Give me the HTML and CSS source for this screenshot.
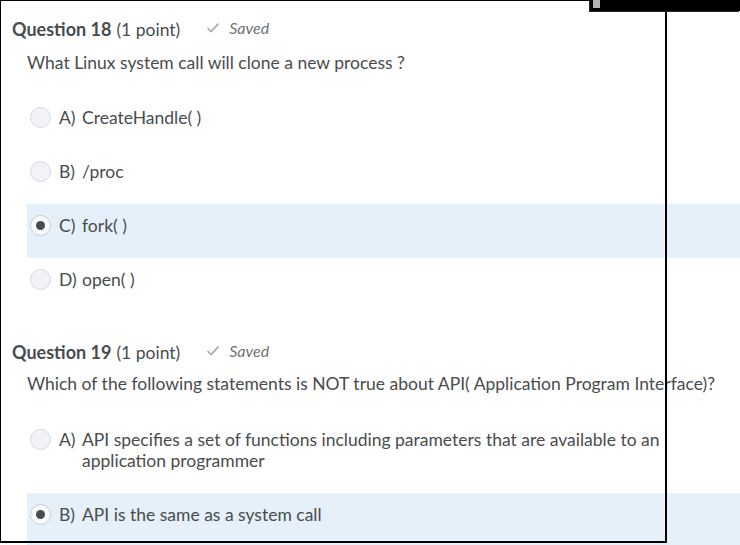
FILE: index.html
```html
<!DOCTYPE html>
<html>
<head>
<meta charset="utf-8">
<link rel="stylesheet" href="styles.css">
</head>
<body>
<div class="page">
  <section class="question q-first">
    <div class="q-head">
      <span class="q-title">Question 18</span>
      <span class="q-points">(1 point)</span>
      <span class="q-saved">
        <svg class="check" width="12" height="10" viewBox="0 0 12 10"><path d="M1 5.5 L4.2 8.5 L11 1.2" fill="none" stroke="#a3a8b0" stroke-width="1.7" stroke-linecap="round" stroke-linejoin="round"/></svg>
        <em>Saved</em>
      </span>
    </div>
    <p class="q-text">What Linux system call will clone a new process ?</p>
    <ul class="options">
      <li class="option"><span class="radio"></span><span class="letter">A)</span><span class="otext">CreateHandle( )</span></li>
      <li class="option"><span class="radio"></span><span class="letter">B)</span><span class="otext">/proc</span></li>
      <li class="option selected"><span class="radio checked"></span><span class="letter">C)</span><span class="otext">fork( )</span></li>
      <li class="option"><span class="radio"></span><span class="letter">D)</span><span class="otext">open( )</span></li>
    </ul>
  </section>
  <section class="question q-second">
    <div class="q-head">
      <span class="q-title">Question 19</span>
      <span class="q-points">(1 point)</span>
      <span class="q-saved">
        <svg class="check" width="12" height="10" viewBox="0 0 12 10"><path d="M1 5.5 L4.2 8.5 L11 1.2" fill="none" stroke="#a3a8b0" stroke-width="1.7" stroke-linecap="round" stroke-linejoin="round"/></svg>
        <em>Saved</em>
      </span>
    </div>
    <p class="q-text">Which of the following statements is NOT true about API( Application Program Interface)?</p>
    <ul class="options">
      <li class="option"><span class="radio"></span><span class="letter">A)</span><span class="otext">API specifies a set of functions including parameters that are available to an application programmer</span></li>
      <li class="option selected"><span class="radio checked"></span><span class="letter">B)</span><span class="otext">API is the same as a system call</span></li>
    </ul>
  </section>
  <div class="frame"></div>
  <div class="topbar"><span class="topbar-knob"></span></div>
</div>
</body>
</html>
```

FILE: styles.css
```css
html, body {
  margin: 0;
  padding: 0;
  background: #fff;
}
body {
  font-family: Lato, "Noto Sans", sans-serif;
  color: #494c4e;
  width: 740px;
  height: 545px;
  overflow: hidden;
}
.page {
  position: relative;
  width: 740px;
  height: 545px;
}
.q-first {
  padding-top: 18px;
}
.q-second {
  padding-top: 29px;
}
.q-head {
  display: flex;
  align-items: baseline;
  height: 22px;
  line-height: 22px;
  padding-left: 12px;
}
.q-title {
  font-weight: 700;
  font-size: 18px;
}
.q-points {
  font-size: 17.5px;
  margin-left: 5px;
}
.q-saved {
  align-self: center;
  margin-left: 27px;
  margin-top: -2px;
  font-size: 16px;
  line-height: 18px;
  color: #6e7376;
  display: inline-flex;
  align-items: center;
  gap: 10px;
}
.q-text {
  margin: 11px 0 0 27px;
  font-size: 17.5px;
  line-height: 24px;
}
.q-second .q-text {
  margin-top: 9px;
}
.options {
  list-style: none;
  margin: 21px 0 0 27px;
  padding: 0;
}
.q-second .options {
  margin-top: 22px;
}
.option {
  display: flex;
  align-items: flex-start;
  padding: 11px 0 22px 3px;
  font-size: 17.5px;
  line-height: 21px;
}
.option.selected {
  background: #e6f0fb;
}
.radio {
  width: 19px;
  height: 19px;
  border-radius: 50%;
  border: 1px solid #d3d9e3;
  background: #f2f3f6;
  flex: none;
  display: flex;
  align-items: center;
  justify-content: center;
}
.radio.checked {
  background: #f9fafb;
  border-color: #c8ccd3;
}
.radio.checked::after {
  content: "";
  width: 9px;
  height: 9px;
  border-radius: 50%;
  background: #494c4e;
}
.letter {
  margin-left: 8px;
  width: 23px;
  flex: none;
}
.otext {
  flex: 1;
  max-width: 582px;
}
.frame {
  position: absolute;
  left: 0;
  top: 0;
  width: 664px;
  height: 540px;
  border-top: 1px solid #000;
  border-left: 1px solid #000;
  border-right: 2px solid #000;
  border-bottom: 2px solid #000;
  pointer-events: none;
}
.topbar {
  position: absolute;
  left: 590px;
  top: 0;
  width: 150px;
  height: 11px;
  background: #000;
  box-shadow: -1px 1px 0 #2a2a2a;
}
.topbar-knob {
  position: absolute;
  left: 3px;
  top: 0;
  width: 7px;
  height: 8px;
  background: #b3b3b3;
}
```
